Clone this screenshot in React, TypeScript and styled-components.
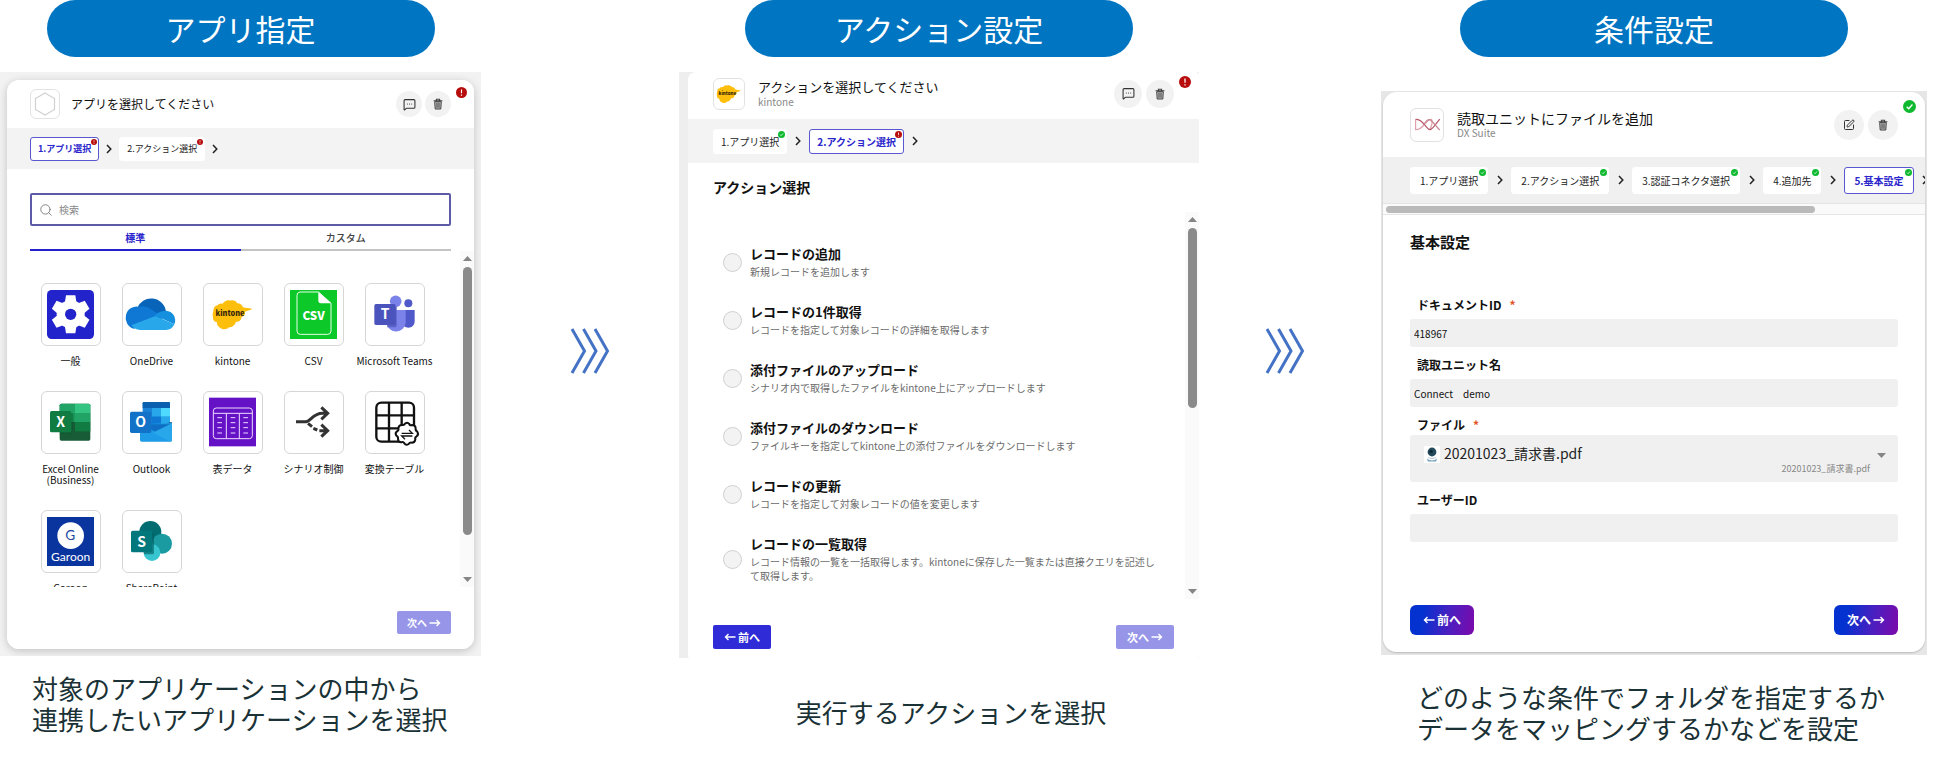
import React from "react";
import styled, { createGlobalStyle, css } from "styled-components";
import { MessageSquareMore, Search, SquarePen } from "lucide-react";

type Size = "s" | "m" | "l";
type Status = "error" | "ok";

const GlobalStyle = createGlobalStyle`
  *, *::before, *::after { box-sizing: border-box; }
  body {
    margin: 0;
    background: #fff;
    color: #222;
    font-family: "Noto Sans CJK JP", "Noto Sans", sans-serif;
  }
  button, input, select { font-family: inherit; }
  h1, h2, p, ol, ul { margin: 0; padding: 0; }
  ol, ul { list-style: none; }
`;

/* ---------- page ---------- */

const Page = styled.main`
  display: grid;
  grid-template-columns: 501fr 178fr 520fr 172fr 556fr;
  padding-right: 23px;
`;

const Column = styled.section<{ $before?: number; $after?: number }>`
  display: flex;
  flex-direction: column;
  min-width: 0;
  padding-left: ${(p) => p.$before ?? 0}px;
  padding-right: ${(p) => p.$after ?? 0}px;
`;

const Pill = styled.h1`
  align-self: center;
  width: 388px;
  max-width: 100%;
  height: 57px;
  border-radius: 29px;
  background: #0075c2;
  color: #fff;
  font-size: 30px;
  font-weight: 400;
  line-height: 57px;
  text-align: center;
`;

const Caption = styled.p<{ $align?: "center" }>`
  color: #1a3236;
  font-size: 26px;
  line-height: 31px;
  white-space: pre-line;
  text-align: ${(p) => p.$align ?? "left"};
`;

const CaptionArea = styled.div<{ $top: number; $left?: number }>`
  padding: ${(p) => p.$top}px 0 0 ${(p) => p.$left ?? 0}px;
`;

const ArrowCell = styled.div`
  display: flex;
  justify-content: center;
  padding-top: 328px;
`;

/* ---------- panel ---------- */

const sizes = {
  s: css`
    --gutter: 23px; --header: 48px; --icon: 30px; --title: 12px;
    --round: 26px; --round-gap: 3px; --bar: 41px; --step: 24px; --step-font: 9px; --step-pad: 7px;
    --sep: 20px; --gap: 11px; --badge: 11px; --dot: 6px;
  `,
  m: css`
    --gutter: 25px; --header: 47px; --icon: 32px; --title: 13px;
    --round: 28px; --round-gap: 4px; --bar: 44px; --step: 25px; --step-font: 10px; --step-pad: 7px;
    --sep: 22px; --gap: 13px; --badge: 12px; --dot: 7px;
  `,
  l: css`
    --gutter: 27px; --header: 65px; --icon: 34px; --title: 14px;
    --round: 30px; --round-gap: 4px; --bar: 46px; --step: 27px; --step-font: 10px; --step-pad: 9px;
    --sep: 23px; --gap: 13px; --badge: 13px; --dot: 7px;
  `,
};

const Backdrop = styled.div<{ $top: number; $pad: string; $tone?: string }>`
  margin-top: ${(p) => p.$top}px;
  padding: ${(p) => p.$pad};
  background: ${(p) => p.$tone ?? "#f2f2f2"};
  overflow: hidden;
`;

const Card = styled.div<{ $size: Size; $radius: string }>`
  ${(p) => sizes[p.$size]}
  display: flex;
  flex-direction: column;
  position: relative;
  overflow: hidden;
  border-radius: ${(p) => p.$radius};
  background: #fff;
`;

const Lift = styled.div<{ $radius: string; $shadow: string }>`
  border-radius: ${(p) => p.$radius};
  box-shadow: ${(p) => p.$shadow};
`;

const Header = styled.header<{ $bottom?: number }>`
  display: flex;
  align-items: center;
  gap: var(--gap);
  height: var(--header);
  padding: 0 var(--gutter) ${(p) => p.$bottom ?? 0}px;
`;

const AppIcon = styled.div`
  display: flex;
  align-items: center;
  justify-content: center;
  flex: none;
  width: var(--icon);
  height: var(--icon);
  border: 1px solid #e2e2e2;
  border-radius: 6px;
  background: #fff;
`;

const Titles = styled.div`
  flex: 1;
  min-width: 0;
`;

const Title = styled.h2`
  font-size: var(--title);
  font-weight: 400;
  line-height: 16px;
  color: #111;
  white-space: nowrap;
`;

const Subtitle = styled.p`
  font-size: 10px;
  line-height: 13px;
  color: #888;
`;

const RoundActions = styled.div`
  display: flex;
  gap: var(--round-gap);
`;

const RoundButton = styled.button`
  display: flex;
  align-items: center;
  justify-content: center;
  width: var(--round);
  height: var(--round);
  padding: 0;
  border: 0;
  border-radius: 50%;
  background: #f2f2f2;
  color: #333;
`;

const CornerBadge = styled.span<{ $top: number; $right: number }>`
  position: absolute;
  top: ${(p) => p.$top}px;
  right: ${(p) => p.$right}px;
  display: flex;
  svg { width: var(--badge); height: var(--badge); }
`;

const StepBar = styled.nav<{ $tone?: string }>`
  height: var(--bar);
  padding-left: var(--gutter);
  background: ${(p) => p.$tone ?? "#f3f3f3"};
  overflow: hidden;
`;

const StepList = styled.ol`
  display: flex;
  align-items: center;
  height: 100%;
`;

const StepItem = styled.li`
  display: flex;
  align-items: center;
  flex: none;
`;

const StepButton = styled.button<{ $current?: boolean }>`
  position: relative;
  height: var(--step);
  padding: 0 var(--step-pad);
  border: 1px solid ${(p) => (p.$current ? "#5a58d0" : "#fff")};
  border-radius: 3px;
  background: #fff;
  color: ${(p) => (p.$current ? "#2a26cc" : "#222")};
  font-size: var(--step-font);
  font-weight: ${(p) => (p.$current ? 700 : 400)};
  white-space: nowrap;
`;

const StepDot = styled.span`
  position: absolute;
  top: 1px;
  right: 1px;
  display: flex;
  svg { width: var(--dot); height: var(--dot); }
`;

const Separator = styled.span`
  display: flex;
  justify-content: center;
  width: var(--sep);
`;

const Heading = styled.h2<{ $size: number }>`
  font-size: ${(p) => p.$size}px;
  line-height: 20px;
  font-weight: 700;
  color: #111;
`;

const Body = styled.div<{ $top: number }>`
  padding: ${(p) => p.$top}px var(--gutter) 0;
`;

const Footer = styled.footer<{ $pad: string; $end?: boolean }>`
  display: flex;
  justify-content: ${(p) => (p.$end ? "flex-end" : "space-between")};
  padding: ${(p) => p.$pad};
`;

const buttonLooks = {
  solid: css`background: #2f2bd6; border-radius: 2px;`,
  pale: css`background: #9795e8; border-radius: 2px;`,
  gradient: css`
    background: linear-gradient(100deg, #0332d0 20%, #4a1fc0 60%, #7d0aac);
    border-radius: 6px;
  `,
};

const NavButton = styled.button<{ $look: keyof typeof buttonLooks; $w: number; $h: number; $font: number }>`
  display: flex;
  align-items: center;
  justify-content: center;
  gap: 2px;
  width: ${(p) => p.$w}px;
  height: ${(p) => p.$h}px;
  padding: 0;
  border: 0;
  color: #fff;
  font-size: ${(p) => p.$font}px;
  font-weight: 700;
  line-height: 16px;
  ${(p) => buttonLooks[p.$look]}
`;

/* ---------- scrolling ---------- */

const ScrollRow = styled.div<{ $height: number; $top?: number }>`
  display: flex;
  height: ${(p) => p.$height}px;
  margin-top: ${(p) => p.$top ?? 0}px;
`;

const ScrollContent = styled.div<{ $pad: string }>`
  flex: 1;
  min-width: 0;
  overflow: hidden;
  padding: ${(p) => p.$pad};
`;

const Track = styled.div`
  display: flex;
  flex-direction: column;
  align-items: center;
  flex: none;
  width: 14px;
  padding: 5px 0;
  background: #fafafa;
`;

const Thumb = styled.span<{ $grow: number }>`
  flex: ${(p) => p.$grow};
  width: 9px;
  margin-top: 6px;
  border-radius: 5px;
  background: #8a8a8a;
`;

const Rest = styled.span<{ $grow: number }>`
  flex: ${(p) => p.$grow};
`;

/* ---------- app picker ---------- */

const SearchBox = styled.label`
  display: flex;
  align-items: center;
  gap: 6px;
  height: 33px;
  padding: 0 7px;
  border: 2px solid #5d5ba8;
  border-radius: 2px;
  color: #777;
`;

const SearchInput = styled.input`
  flex: 1;
  min-width: 0;
  padding: 0;
  border: 0;
  outline: 0;
  background: transparent;
  font-size: 10px;
  line-height: 16px;
  &::placeholder { color: #888; opacity: 1; }
`;

const Tabs = styled.div`
  display: grid;
  grid-template-columns: 1fr 1fr;
`;

const Tab = styled.button<{ $on?: boolean }>`
  height: 25px;
  padding: 0;
  border: 0;
  border-bottom: 2px solid ${(p) => (p.$on ? "#2420cc" : "#c4c4c4")};
  background: none;
  color: ${(p) => (p.$on ? "#2a26cc" : "#444")};
  font-size: 10px;
  font-weight: ${(p) => (p.$on ? 700 : 500)};
`;

const AppGrid = styled.ul`
  display: grid;
  grid-template-columns: repeat(5, minmax(0, 1fr));
  row-gap: 25px;
`;

const AppItem = styled.li`
  display: flex;
  justify-content: center;
`;

const AppButton = styled.button`
  display: flex;
  flex-direction: column;
  align-items: center;
  gap: 9px;
  padding: 0;
  border: 0;
  background: none;
  color: #111;
  font-size: 10px;
  line-height: 11px;
  white-space: pre;
`;

const Tile = styled.span`
  display: flex;
  width: 60px;
  height: 63px;
  border: 1px solid #d6d6d6;
  border-radius: 6px;
  svg { width: 100%; height: 100%; }
`;

/* ---------- action list ---------- */

const ActionList = styled.ul`
  display: flex;
  flex-direction: column;
  gap: 22px;
`;

const ActionLabel = styled.label`
  display: flex;
  align-items: center;
  gap: 8px;
`;

const Radio = styled.input`
  appearance: none;
  flex: none;
  width: 19px;
  height: 19px;
  margin: 3px 0 0;
  border: 1px solid #d0d0d0;
  border-radius: 50%;
  background: #f3f3f3;
`;

const ActionName = styled.span`
  display: block;
  font-size: 13px;
  line-height: 22px;
  font-weight: 700;
  color: #111;
`;

const ActionNote = styled.span`
  display: block;
  font-size: 10px;
  line-height: 14px;
  color: #6c6c6c;
`;

/* ---------- form ---------- */

const HorizontalTrack = styled.div`
  display: flex;
  align-items: center;
  height: 12px;
  padding: 0 3px;
  border-top: 1px solid #e4e4e4;
  border-bottom: 1px solid #e6e6e6;
  background: #fafafa;
`;

const HorizontalThumb = styled.span`
  width: 80%;
  height: 7px;
  border-radius: 4px;
  background: #bababa;
`;

const Field = styled.div`
  display: flex;
  flex-direction: column;
`;

const FieldLabel = styled.label<{ $tight?: boolean }>`
  padding: 8px 7px ${(p) => (p.$tight ? 0 : 4)}px;
  font-size: 12px;
  line-height: 20px;
  font-weight: 700;
  color: #111;
`;

const Required = styled.span`
  margin-left: 8px;
  color: #e2541f;
`;

const TextInput = styled.input`
  width: 100%;
  height: 28px;
  padding: 0 4px;
  border: 0;
  border-radius: 3px;
  background: #f0f0f0;
  color: #111;
  font-size: 10px;
`;

const FileField = styled.div`
  display: grid;
  height: 47px;
  border-radius: 3px;
  background: #f0f0f0;
  > * { grid-area: 1 / 1; }
`;

const FileSelect = styled.select`
  appearance: none;
  width: 100%;
  padding: 0 34px 12px 34px;
  border: 0;
  background: transparent;
  color: #222;
  font-size: 14px;
`;

const FileMark = styled.span`
  display: flex;
  padding: 11px 14px;
  pointer-events: none;
`;

const FileNote = styled.span`
  display: flex;
  align-items: flex-end;
  justify-content: flex-end;
  gap: 7px;
  padding: 0 12px 7px;
  font-size: 9px;
  line-height: 13px;
  color: #888;
  pointer-events: none;
  svg { align-self: center; }
`;

/* ---------- small drawings ---------- */

const StatusMark = ({ status }: { status: Status }) => (
  <svg viewBox="0 0 12 12" aria-hidden="true">
    <circle cx="6" cy="6" r="6" fill={status === "error" ? "#b80d0d" : "#0fb92f"} />
    {status === "error" ? (
      <path d="M6 2.6v4.2M6 8.2v1.4" stroke="#fff" strokeWidth="1.3" />
    ) : (
      <path d="M3.4 6.2l1.9 1.9 3.4-3.9" fill="none" stroke="#fff" strokeWidth="1.2" />
    )}
  </svg>
);

const Chevron = () => (
  <svg width="6" height="10" viewBox="0 0 6 10" aria-hidden="true">
    <path d="M1 1l3.8 4L1 9" fill="none" stroke="#222" strokeWidth="1.5" />
  </svg>
);

const TripleChevron = () => (
  <svg width="40" height="46" viewBox="0 0 40 46" aria-hidden="true">
    {[0, 11.5, 23].map((x) => (
      <path key={x} d={`M${x + 2} 1l12.5 22L${x + 2} 45`} fill="none" stroke="#4472c4" strokeWidth="3" />
    ))}
  </svg>
);

const Trash = () => (
  <svg width="12" height="12" viewBox="0 0 12 12" aria-hidden="true">
    <path d="M1.6 2.7h8.8M4.4 2.4V1.2h3.2v1.2" fill="none" stroke="#444" strokeWidth="1.1" />
    <path d="M2.7 3.6h6.6l-.5 7.4H3.2z" fill="#bbb" stroke="#444" strokeWidth="1" />
    <path d="M4.8 4.6v5.2M6 4.6v5.2M7.2 4.6v5.2" stroke="#444" strokeWidth=".7" />
  </svg>
);

const TriangleSvg = styled.svg`
  flex: none;
`;

const Triangle = ({ down }: { down?: boolean }) => (
  <TriangleSvg width="9" height="5" viewBox="0 0 9 5" aria-hidden="true">
    <path d={down ? "M0 0h9L4.500 5z" : "M0 5h9L4.500 0z"} fill="#858585" />
  </TriangleSvg>
);

const Arrow = ({ back }: { back?: boolean }) => (
  <svg width="12" height="8" viewBox="0 0 12 8" aria-hidden="true">
    <path
      d={back ? "M11.500 4H1.500M4.500 1l-3 3 3 3" : "M.5 4h10M7.500 1l3 3-3 3"}
      fill="none"
      stroke="currentColor"
      strokeWidth="1.4"
    />
  </svg>
);

const KintoneShape = () => (
  <>
    <path
      fill="#fdbe0c"
      d="M31 84c0-9 5-16 13-17 3-5 9-7 15-5 5-8 14-12 23-9 8-3 17 1 21 8 9 0 15 5 17 12 9 2 18 2 28 5-7 4-14 5-22 8 2 8-3 14-10 16-1 10-8 15-17 14-3 10-11 17-21 17-5 7-18 8-26 2-7-4-11-10-10-17-9-1-13-8-12-16-2-5-1-12 1-18z"
    />
    <text x="81" y="98" textAnchor="middle" fontSize="22" fontWeight="900" fill="#33260a">
      kintone
    </text>
  </>
);

const letter = { textAnchor: "middle" as const, fontWeight: 700, fill: "#fff" };

const logos: Record<string, React.ReactNode> = {
  general: (
    <>
      <rect x="18" y="21" width="141" height="147" rx="14" fill="#2323cc" />
      <g fill="#fff">
        <circle cx="89" cy="94" r="42" />
        {[0, 60, 120, 180, 240, 300].map((a) => (
          <path key={a} d="M71 62l4-25h28l4 25z" transform={`rotate(${a} 89 94)`} />
        ))}
      </g>
      <circle cx="89" cy="94" r="17" fill="#2323cc" />
    </>
  ),
  onedrive: (
    <>
      <path fill="#0864b8" d="M45 76a45 45 0 0 1 87 10l-40 18z" />
      <path fill="#0f78d4" d="M52 72c14-3 25 0 37 8l38 24-92 33A32 33 0 0 1 52 72z" />
      <path fill="#1490df" d="M132 83a29 29 0 0 1 25 41l-59-27c8-8 20-15 34-14z" />
      <path fill="#28a8ea" d="M100 99l57 25c-5 11-13 17-25 17H54c-11 0-21-6-26-14z" />
    </>
  ),
  kintone: <KintoneShape />,
  csv: (
    <>
      <rect x="18" y="21" width="141" height="147" fill="#0cc828" />
      <path d="M48 27h56l37 34v83a10 10 0 0 1-10 10H49a10 10 0 0 1-10-10V37a10 10 0 0 1 9-10z" fill="none" stroke="#e6ffe9" strokeWidth="3" />
      <path d="M103 27l39 34h-32a7 7 0 0 1-7-7z" fill="#fff" />
      <text {...letter} x="89" y="111" fontSize="35" fontWeight={900}>CSV</text>
    </>
  ),
  teams: (
    <>
      <circle cx="130" cy="61" r="12" fill="#5059c9" />
      <path d="M100 81h49v34c0 12-9 19-19 19s-18-6-20-14z" fill="#5059c9" />
      <circle cx="92" cy="55" r="17.500" fill="#7b83eb" />
      <path d="M65 81h57v40a29 29 0 0 1-57 2z" fill="#7b83eb" />
      <path d="M70 72h25v56a5 5 0 0 1-5 5H67z" fill="#5a62c8" />
      <rect x="28" y="63" width="64" height="63" rx="5" fill="#4b53bc" />
      <text {...letter} x="60" y="109" fontSize="42">T</text>
    </>
  ),
  excel: (
    <>
      <rect x="56" y="38" width="92" height="111" rx="5" fill="#185c37" />
      <path d="M61 38h41v28H56V43a5 5 0 0 1 5-5z" fill="#21a366" />
      <path d="M102 38h41a5 5 0 0 1 5 5v23h-46z" fill="#33c481" />
      <path d="M56 66h46v27H56z" fill="#189a58" />
      <path d="M102 66h46v27h-46z" fill="#21a366" />
      <path d="M102 93h46v28h-46z" fill="#107c41" />
      <path d="M60 67h33a4 4 0 0 1 4 4v55a5 5 0 0 1-5 5H56z" fill="#0d5c30" opacity=".5" />
      <rect x="27" y="60" width="64" height="64" rx="5" fill="#107c41" />
      <text {...letter} x="59" y="107" fontSize="42">X</text>
    </>
  ),
  outlook: (
    <>
      <rect x="62" y="33" width="82" height="80" rx="4" fill="#1a83d8" />
      <path d="M66 33h74a4 4 0 0 1 4 4v14H62V37a4 4 0 0 1 4-4z" fill="#0b60b0" />
      <path d="M90 51h27v26H90z" fill="#28a8ea" />
      <path d="M117 51h27v26h-27z" fill="#50d9ff" />
      <path d="M90 77h27v24H90z" fill="#0f78d4" />
      <path d="M117 77h27v24h-27z" fill="#28a8ea" />
      <path d="M144 94l6 0v4l-48 32-12-14z" fill="#123b6d" />
      <path d="M54 100l96-4v51a5 5 0 0 1-5 5H59a5 5 0 0 1-5-5z" fill="#1e9be6" />
      <path d="M60 100h86l-44 24z" fill="#0f6fc4" />
      <path d="M150 97v50a5 5 0 0 1-4 5L92 125z" fill="#28a8ea" />
      <rect x="24" y="62" width="64" height="64" rx="5" fill="#1272c8" />
      <text {...letter} x="56" y="109" fontSize="42">O</text>
    </>
  ),
  table: (
    <>
      <rect x="18" y="20" width="141" height="146" fill="#6512c6" />
      <g fill="none" stroke="#efd9ff" strokeWidth="3">
        <rect x="31" y="51" width="117" height="92" rx="9" />
        <path d="M31 67h117M70 67v76M109 67v76" />
        {[80, 95, 110, 126].map((y) => (
          <path key={y} d={`M43 ${y}h14M83 ${y}h14M121 ${y}h14`} />
        ))}
      </g>
    </>
  ),
  scenario: (
    <g fill="none" stroke="#333" strokeWidth="9">
      <path d="M36 92h30c14 0 20-25 50-25h14M112 49l19 18-19 18" />
      <path d="M72 97l12 10M88 112l12 5M106 119h24M112 101l19 18-19 18" />
    </g>
  ),
  convert: (
    <>
      <g fill="none" stroke="#111" strokeWidth="7">
        <rect x="34" y="35" width="113" height="117" rx="15" />
        <path d="M72 35v117M110 35v117M34 73h113M34 112h113" />
      </g>
      <path
        d="M119 99q7-8 14 0q1 6 8 3q11 0 11 11q-1 6 5 9q5 8-2 14q-6 3-4 9q-1 10-11 10q-6-1-9 4q-8 5-13-2q-2-6-9-3q-10-1-10-11q1-6-5-9q-5-8 2-13q6-3 4-9q1-10 11-10q6 1 8-3z"
        fill="#fff"
        stroke="#111"
        strokeWidth="6"
      />
      <path d="M110 127h32l-10-10M142 135h-32l10 10" fill="none" stroke="#111" strokeWidth="4" />
    </>
  ),
  garoon: (
    <>
      <rect x="18" y="21" width="141" height="147" fill="#0a359e" />
      <circle cx="89" cy="77" r="40" fill="#fff" />
      <g fontFamily="Lato, sans-serif" textAnchor="middle">
        <text x="88" y="91" fontSize="41" fill="#23489f">G</text>
        <text x="89" y="153" fontSize="36" fill="#fff">Garoon</text>
      </g>
    </>
  ),
  sharepoint: (
    <>
      <circle cx="85" cy="66" r="33" fill="#036c70" />
      <circle cx="120" cy="101" r="30" fill="#1a9ba1" />
      <circle cx="90" cy="128" r="25" fill="#37c6d0" />
      <path d="M58 68h34a4 4 0 0 1 4 4v56a5 5 0 0 1-5 5H66z" fill="#02585b" opacity=".6" />
      <rect x="27" y="62" width="64" height="65" rx="5" fill="#03787c" />
      <text {...letter} x="59" y="110" fontSize="42">S</text>
    </>
  ),
};

const Hexagon = () => (
  <svg width="22" height="24" viewBox="0 0 22 24" aria-hidden="true">
    <path d="M11 1l9.500 5.500v11L11 23l-9.500-5.500v-11z" fill="#fff" stroke="#d0d0d0" strokeWidth="1.2" />
  </svg>
);

const KintoneMini = () => (
  <svg width="26" height="20" viewBox="28 46 122 98" aria-hidden="true">
    <KintoneShape />
  </svg>
);

const DxMark = () => (
  <svg width="27" height="13" viewBox="0 0 72 36" aria-hidden="true">
    <g fill="none" strokeWidth="3.500">
      <path d="M3 4v28c14 1 18-8 25-15S40 3 46 4s1 22-4 28" stroke="#e0a3ae" />
      <path d="M3 4c14-1 18 8 25 15s9 14 16 13 18-20 26-29" stroke="#b9586b" />
      <path d="M26 18C32 8 37 3 43 5s18 20 27 28" stroke="#c98793" />
    </g>
  </svg>
);

const PdfSourceMark = () => (
  <svg width="16" height="17" viewBox="0 0 16 17" aria-hidden="true">
    <rect width="16" height="17" fill="#fff" />
    <circle cx="8" cy="6" r="4.400" fill="#234a5b" />
    <circle cx="7" cy="5.500" r="1.800" fill="#0e2b38" />
    <path d="M3 12.500c2 2.500 8 2.500 10 0l-.8 3H3.800z" fill="#6f9dbb" />
    <path d="M4 11.500c2 1.400 6 1.400 8 0" fill="none" stroke="#b9cfdd" />
  </svg>
);

/* ---------- composed parts ---------- */

interface Step {
  label: string;
  status: Status;
  current?: boolean;
}

const Steps = ({ steps, tone }: { steps: Step[]; tone?: string }) => (
  <StepBar $tone={tone} aria-label="設定ステップ">
    <StepList>
      {steps.map((s) => (
        <StepItem key={s.label}>
          <StepButton type="button" $current={s.current} aria-current={s.current ? "step" : undefined}>
            {s.label}
            <StepDot>
              <StatusMark status={s.status} />
            </StepDot>
          </StepButton>
          <Separator>
            <Chevron />
          </Separator>
        </StepItem>
      ))}
    </StepList>
  </StepBar>
);

const PanelHeader = (p: {
  icon: React.ReactNode;
  title: string;
  subtitle?: string;
  action: "comment" | "edit";
  bottom?: number;
}) => (
  <Header $bottom={p.bottom}>
    <AppIcon>{p.icon}</AppIcon>
    <Titles>
      <Title>{p.title}</Title>
      {p.subtitle && <Subtitle>{p.subtitle}</Subtitle>}
    </Titles>
    <RoundActions>
      <RoundButton type="button" aria-label={p.action === "comment" ? "コメント" : "編集"}>
        {p.action === "comment" ? <MessageSquareMore size={13} /> : <SquarePen size={12} />}
      </RoundButton>
      <RoundButton type="button" aria-label="削除">
        <Trash />
      </RoundButton>
    </RoundActions>
  </Header>
);

const ScrollBar = ({ thumb, rest }: { thumb: number; rest: number }) => (
  <Track aria-hidden="true">
    <Triangle />
    <Thumb $grow={thumb} />
    <Rest $grow={rest} />
    <Triangle down />
  </Track>
);

/* ---------- data ---------- */

const apps = [
  { logo: "general", name: "一般" },
  { logo: "onedrive", name: "OneDrive" },
  { logo: "kintone", name: "kintone" },
  { logo: "csv", name: "CSV" },
  { logo: "teams", name: "Microsoft Teams" },
  { logo: "excel", name: "Excel Online\n(Business)" },
  { logo: "outlook", name: "Outlook" },
  { logo: "table", name: "表データ" },
  { logo: "scenario", name: "シナリオ制御" },
  { logo: "convert", name: "変換テーブル" },
  { logo: "garoon", name: "Garoon" },
  { logo: "sharepoint", name: "SharePoint" },
];

const actions = [
  ["レコードの追加", "新規レコードを追加します"],
  ["レコードの1件取得", "レコードを指定して対象レコードの詳細を取得します"],
  ["添付ファイルのアップロード", "シナリオ内で取得したファイルをkintone上にアップロードします"],
  ["添付ファイルのダウンロード", "ファイルキーを指定してkintone上の添付ファイルをダウンロードします"],
  ["レコードの更新", "レコードを指定して対象レコードの値を変更します"],
  [
    "レコードの一覧取得",
    "レコード情報の一覧を一括取得します。kintoneに保存した一覧または直接クエリを記述して取得します。",
  ],
];

/* ---------- columns ---------- */

const AppColumn = () => (
  <Column $after={20}>
    <Pill>アプリ指定</Pill>
    <Backdrop $top={15} $pad="8px 7px 7px">
      <Lift $radius="12px" $shadow="0 2px 8px rgba(0, 0, 0, 0.2)">
        <Card $size="s" $radius="12px">
          <PanelHeader icon={<Hexagon />} title="アプリを選択してください" action="comment" />
          <CornerBadge $top={7} $right={7}>
            <StatusMark status="error" />
          </CornerBadge>
          <Steps
            steps={[
              { label: "1.アプリ選択", status: "error", current: true },
              { label: "2.アクション選択", status: "error" },
            ]}
          />
          <Body $top={24}>
            <SearchBox>
              <Search size={14} strokeWidth={1.5} aria-hidden="true" />
              <SearchInput type="search" placeholder="検索" aria-label="検索" />
            </SearchBox>
            <Tabs role="tablist">
              <Tab type="button" role="tab" aria-selected="true" $on>標準</Tab>
              <Tab type="button" role="tab" aria-selected="false">カスタム</Tab>
            </Tabs>
          </Body>
          <ScrollRow $height={336}>
            <ScrollContent $pad="32px 25px 0 23px">
              <AppGrid>
                {apps.map((a) => (
                  <AppItem key={a.logo}>
                    <AppButton type="button">
                      <Tile>
                        <svg viewBox="3 3 174 183" aria-hidden="true">{logos[a.logo]}</svg>
                      </Tile>
                      <span>{a.name}</span>
                    </AppButton>
                  </AppItem>
                ))}
              </AppGrid>
            </ScrollContent>
            <ScrollBar thumb={266} rest={42} />
          </ScrollRow>
          <Footer $pad="24px 23px 15px" $end>
            <NavButton type="button" $look="pale" $w={54} $h={23} $font={10}>
              次へ <Arrow />
            </NavButton>
          </Footer>
        </Card>
      </Lift>
    </Backdrop>
    <CaptionArea $top={16} $left={32}>
      <Caption>{"対象のアプリケーションの中から\n連携したいアプリケーションを選択"}</Caption>
    </CaptionArea>
  </Column>
);

const ActionColumn = () => (
  <Column>
    <Pill>アクション設定</Pill>
    <Backdrop $top={15} $pad="0 0 0 9px" $tone="#eeeeee">
      <Card $size="m" $radius="8px 4px 2px 2px">
        <PanelHeader
          icon={<KintoneMini />}
          title="アクションを選択してください"
          subtitle="kintone"
          action="comment"
          bottom={4}
        />
        <CornerBadge $top={4} $right={8}>
          <StatusMark status="error" />
        </CornerBadge>
        <Steps
          steps={[
            { label: "1.アプリ選択", status: "ok" },
            { label: "2.アクション選択", status: "error", current: true },
          ]}
        />
        <Body $top={14}>
          <Heading $size={14}>アクション選択</Heading>
        </Body>
        <ScrollRow $height={387} $top={15}>
          <ScrollContent $pad="31px 24px 0 35px">
            <ActionList>
              {actions.map(([name, note]) => (
                <li key={name}>
                  <ActionLabel>
                    <Radio type="radio" name="action" />
                    <span>
                      <ActionName>{name}</ActionName>
                      <ActionNote>{note}</ActionNote>
                    </span>
                  </ActionLabel>
                </li>
              ))}
            </ActionList>
          </ScrollContent>
          <ScrollBar thumb={177} rest={178} />
        </ScrollRow>
        <Footer $pad="26px 25px 9px">
          <NavButton type="button" $look="solid" $w={58} $h={24} $font={11}>
            <Arrow back /> 前へ
          </NavButton>
          <NavButton type="button" $look="pale" $w={58} $h={24} $font={11}>
            次へ <Arrow />
          </NavButton>
        </Footer>
      </Card>
    </Backdrop>
    <CaptionArea $top={38} $left={24}>
      <Caption $align="center">実行するアクションを選択</Caption>
    </CaptionArea>
  </Column>
);

const ConditionColumn = () => (
  <Column $before={10}>
    <Pill>条件設定</Pill>
    <Backdrop $top={34} $pad="1px 2px 3px" $tone="#e6e6e6">
      <Lift $radius="14px" $shadow="0 1px 2px rgba(0, 0, 0, 0.2)">
        <Card $size="l" $radius="14px">
          <PanelHeader
            icon={<DxMark />}
            title="読取ユニットにファイルを追加"
            subtitle="DX Suite"
            action="edit"
          />
          <CornerBadge $top={8} $right={9}>
            <StatusMark status="ok" />
          </CornerBadge>
          <Steps
            tone="#f0f0f0"
            steps={[
              { label: "1.アプリ選択", status: "ok" },
              { label: "2.アクション選択", status: "ok" },
              { label: "3.認証コネクタ選択", status: "ok" },
              { label: "4.追加先", status: "ok" },
              { label: "5.基本設定", status: "ok", current: true },
            ]}
          />
          <HorizontalTrack aria-hidden="true">
            <HorizontalThumb />
          </HorizontalTrack>
          <Body $top={17}>
            <Heading $size={15}>基本設定</Heading>
          </Body>
          <Body $top={35}>
            <Field>
              <FieldLabel htmlFor="document-id">
                ドキュメントID<Required>*</Required>
              </FieldLabel>
              <TextInput id="document-id" defaultValue="418967" required />
            </Field>
            <Field>
              <FieldLabel htmlFor="unit-name">読取ユニット名</FieldLabel>
              <TextInput id="unit-name" defaultValue="Connect　demo" />
            </Field>
            <Field>
              <FieldLabel htmlFor="file" $tight>
                ファイル<Required>*</Required>
              </FieldLabel>
              <FileField>
                <FileMark>
                  <PdfSourceMark />
                </FileMark>
                <FileNote>
                  20201023_請求書.pdf
                  <Triangle down />
                </FileNote>
                <FileSelect id="file" defaultValue="invoice">
                  <option value="invoice">20201023_請求書.pdf</option>
                </FileSelect>
              </FileField>
            </Field>
            <Field>
              <FieldLabel htmlFor="user-id">ユーザーID</FieldLabel>
              <TextInput id="user-id" />
            </Field>
          </Body>
          <Footer $pad="63px 27px 17px">
            <NavButton type="button" $look="gradient" $w={64} $h={30} $font={12}>
              <Arrow back /> 前へ
            </NavButton>
            <NavButton type="button" $look="gradient" $w={64} $h={30} $font={12}>
              次へ <Arrow />
            </NavButton>
          </Footer>
        </Card>
      </Lift>
    </Backdrop>
    <CaptionArea $top={26} $left={36}>
      <Caption>{"どのような条件でフォルダを指定するか\nデータをマッピングするかなどを設定"}</Caption>
    </CaptionArea>
  </Column>
);

export default function App() {
  return (
    <>
      <GlobalStyle />
      <Page>
        <AppColumn />
        <ArrowCell>
          <TripleChevron />
        </ArrowCell>
        <ActionColumn />
        <ArrowCell>
          <TripleChevron />
        </ArrowCell>
        <ConditionColumn />
      </Page>
    </>
  );
}
